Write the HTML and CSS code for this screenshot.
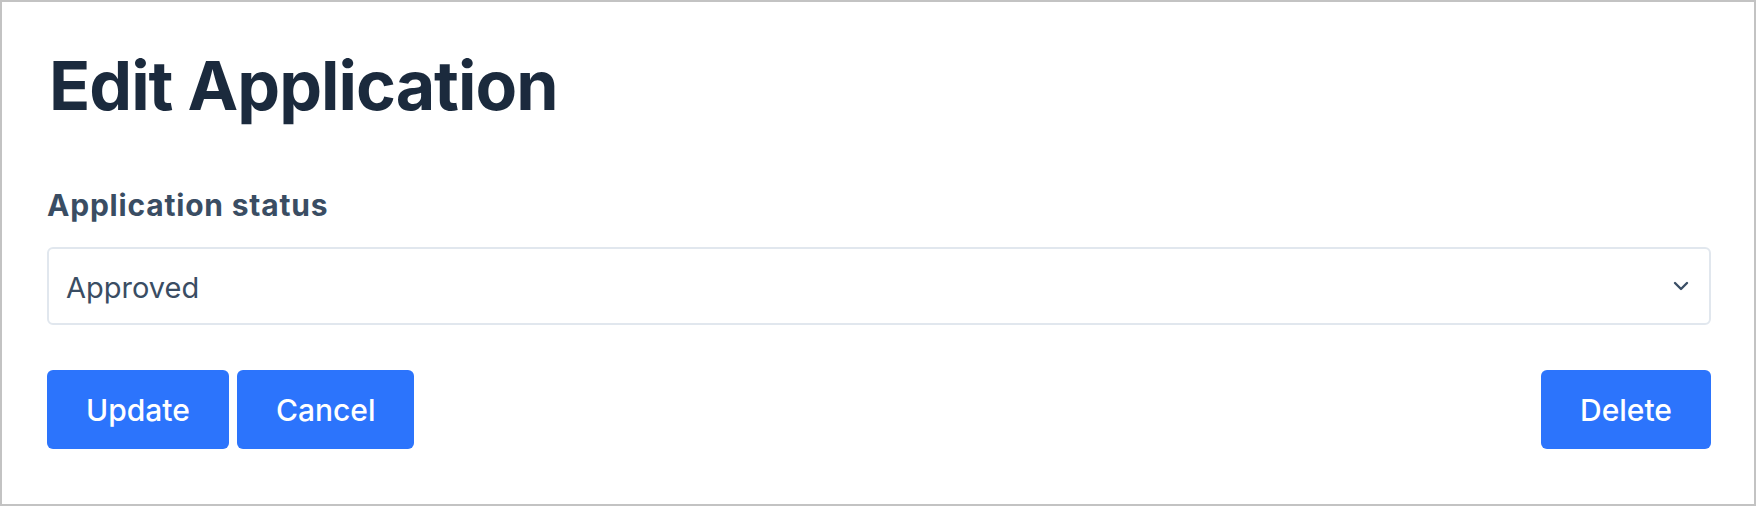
FILE: index.html
```html
<!DOCTYPE html>
<html lang="en">
<head>
<meta charset="utf-8">
<title>Edit Application</title>
<link rel="stylesheet" href="styles.css">
</head>
<body>
<main class="page">
  <h1 class="title">Edit Application</h1>
  <form class="form">
    <div class="field">
      <label class="label">Application status</label>
      <div class="select" role="combobox" aria-expanded="false">
        <span class="select-value">Approved</span>
        <svg class="chevron" width="16" height="10" viewBox="0 0 16 10" aria-hidden="true">
          <path d="M2 2 L8 8 L14 2" fill="none" stroke="#3b4f66" stroke-width="2.4" stroke-linecap="round" stroke-linejoin="round"/>
        </svg>
      </div>
    </div>
    <div class="actions">
      <div class="actions-left">
        <button type="button" class="btn">Update</button>
        <button type="button" class="btn">Cancel</button>
      </div>
      <button type="button" class="btn">Delete</button>
    </div>
  </form>
</main>
</body>
</html>
```

FILE: styles.css
```css
* { box-sizing: border-box; }
html, body { margin: 0; padding: 0; background: #fff; }
body {
  font-family: "Inter", "Noto Sans", sans-serif;
}
.page {
  width: 1756px;
  height: 506px;
  border: 2px solid #c3c3c3;
  padding: 49px 43px 0 45px;
}
.title {
  margin: 0;
  padding-left: 2px;
  font-size: 68px;
  line-height: 68px;
  font-weight: 700;
  color: #1b2a3d;
  letter-spacing: -1px;
}
.form {
  margin-top: 72px;
}
.field {
  display: flex;
  flex-direction: column;
  gap: 27px;
}
.label {
  font-size: 30px;
  line-height: 29px;
  font-weight: 700;
  color: #3a4d63;
  letter-spacing: 0.8px;
}
.select {
  height: 78px;
  border: 2px solid #e1e7ee;
  border-radius: 6px;
  display: flex;
  align-items: center;
  justify-content: space-between;
  padding: 0 20px 0 17px;
}
.select-value {
  font-size: 29px;
  color: #3a4d63;
  padding-top: 3px;
}
.chevron { display: block; }
.actions {
  margin-top: 45px;
  display: flex;
  justify-content: space-between;
}
.actions-left {
  display: flex;
  gap: 8px;
}
.btn {
  height: 79px;
  padding: 0 39px;
  border: none;
  border-radius: 6px;
  background: #2c74fc;
  color: #fff;
  font-family: inherit;
  font-size: 30px;
  font-weight: 500;
  cursor: pointer;
}
```
